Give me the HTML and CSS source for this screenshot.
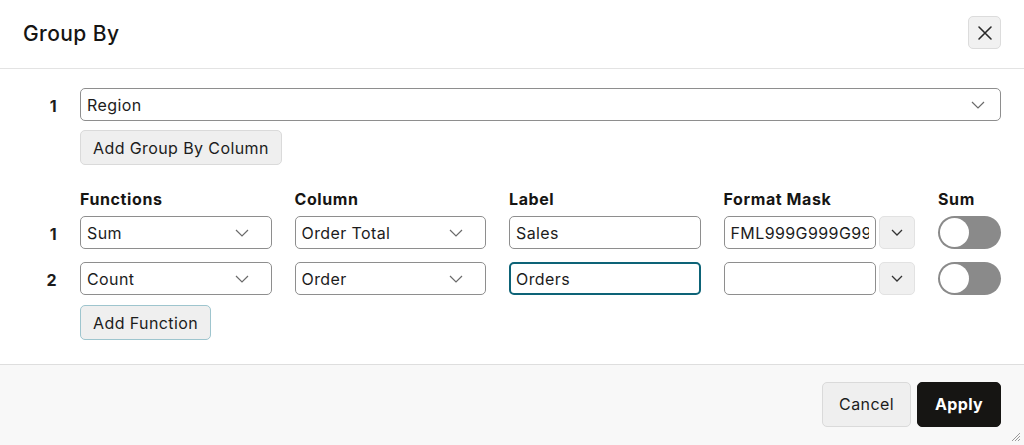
FILE: index.html
```html
<!DOCTYPE html>
<html lang="en">
<head>
<meta charset="utf-8">
<title>Group By</title>
<link rel="stylesheet" href="styles.css">
</head>
<body>
<div class="dialog">
  <header class="dlg-header">
    <h1 class="dlg-title">Group By</h1>
    <button class="close-btn" aria-label="Close">
      <svg width="16" height="16" viewBox="0 0 16 16"><path d="M2 2 L14 14 M14 2 L2 14" stroke="#2a2a2a" stroke-width="1.6" fill="none" stroke-linecap="round"/></svg>
    </button>
  </header>

  <main class="dlg-body">
    <div class="group-row">
      <div class="row-num">1</div>
      <div class="field select">
        <span class="val">Region</span>
        <svg class="chev" width="14" height="8" viewBox="0 0 14 8"><path d="M1 1 L7 7 L13 1" stroke="#6b6b6b" stroke-width="1.2" fill="none"/></svg>
      </div>
    </div>
    <div class="btn-row">
      <button class="btn">Add Group By Column</button>
    </div>

    <div class="fn-grid">
      <div></div>
      <div class="col-head">Functions</div>
      <div class="col-head">Column</div>
      <div class="col-head">Label</div>
      <div class="col-head">Format Mask</div>
      <div class="col-head">Sum</div>

      <div class="row-num">1</div>
      <div class="field select"><span class="val">Sum</span><svg class="chev" width="14" height="8" viewBox="0 0 14 8"><path d="M1 1 L7 7 L13 1" stroke="#6b6b6b" stroke-width="1.2" fill="none"/></svg></div>
      <div class="field select"><span class="val">Order Total</span><svg class="chev" width="14" height="8" viewBox="0 0 14 8"><path d="M1 1 L7 7 L13 1" stroke="#6b6b6b" stroke-width="1.2" fill="none"/></svg></div>
      <div class="field"><span class="val">Sales</span></div>
      <div class="mask">
        <div class="field mask-input"><span class="val">FML999G999G999G999D00</span></div>
        <div class="mask-btn"><svg width="12" height="7" viewBox="0 0 12 7"><path d="M1 1 L6 6 L11 1" stroke="#333" stroke-width="1.3" fill="none"/></svg></div>
      </div>
      <div class="toggle"><span class="knob"></span></div>

      <div class="row-num">2</div>
      <div class="field select"><span class="val">Count</span><svg class="chev" width="14" height="8" viewBox="0 0 14 8"><path d="M1 1 L7 7 L13 1" stroke="#6b6b6b" stroke-width="1.2" fill="none"/></svg></div>
      <div class="field select"><span class="val">Order</span><svg class="chev" width="14" height="8" viewBox="0 0 14 8"><path d="M1 1 L7 7 L13 1" stroke="#6b6b6b" stroke-width="1.2" fill="none"/></svg></div>
      <div class="field focused"><span class="val">Orders</span></div>
      <div class="mask">
        <div class="field mask-input"><span class="val"></span></div>
        <div class="mask-btn"><svg width="12" height="7" viewBox="0 0 12 7"><path d="M1 1 L6 6 L11 1" stroke="#333" stroke-width="1.3" fill="none"/></svg></div>
      </div>
      <div class="toggle"><span class="knob"></span></div>

      <div></div>
      <div class="add-fn-cell"><button class="btn btn-focus">Add Function</button></div>
    </div>
  </main>

  <footer class="dlg-footer">
    <button class="btn btn-lg">Cancel</button>
    <button class="btn btn-lg btn-primary">Apply</button>
    <svg class="grip" width="12" height="12" viewBox="0 0 12 12"><path d="M11 3 L3 11 M11 6 L6 11 M11 9 L9 11" stroke="#9a9a9a" stroke-width="1"/></svg>
  </footer>
</div>
</body>
</html>
```

FILE: styles.css
```css
* { box-sizing: border-box; }

html, body {
  margin: 0;
  padding: 0;
  background: #ffffff;
}

body {
  font-family: Inter, "Liberation Sans", Arial, sans-serif;
  color: #1c1c1c;
  font-size: 16px;
  letter-spacing: 0.4px;
}

.dialog {
  width: 1024px;
  height: 445px;
  display: flex;
  flex-direction: column;
  position: relative;
}

.dlg-header {
  height: 69px;
  flex: 0 0 69px;
  display: flex;
  align-items: center;
  justify-content: space-between;
  padding: 0 23px;
  border-bottom: 1px solid #e3e3e3;
}

.dlg-title {
  margin: 0;
  font-size: 21px;
  font-weight: 500;
  color: #161513;
  letter-spacing: 0.4px;
  padding-bottom: 2px;
}

.close-btn {
  width: 33px;
  height: 33px;
  border: 1px solid #dcdcdc;
  border-radius: 5px;
  background: #f1f1f1;
  display: flex;
  align-items: center;
  justify-content: center;
  padding: 0;
  margin-top: -3px;
}

.dlg-body {
  flex: 1;
  padding: 19px 23px 0 0;
}

.group-row {
  display: grid;
  grid-template-columns: 57px minmax(0, 1fr);
  column-gap: 23px;
  align-items: center;
}

.row-num {
  text-align: right;
  font-weight: 700;
  font-size: 16px;
  color: #1c1c1c;
  padding-top: 3px;
}

.field {
  height: 33px;
  min-width: 0;
  border: 1px solid #8e8e8e;
  border-radius: 5px;
  background: #fff;
  display: flex;
  align-items: center;
  padding: 0 6px;
  font-size: 16px;
  color: #1c1c1c;
  overflow: hidden;
  white-space: nowrap;
}

.field .val {
  flex: 1;
  min-width: 0;
  overflow: hidden;
  padding-top: 1px;
}

.select .chev {
  flex: 0 0 auto;
  margin-right: 10px;
}

.group-row .select .chev {
  margin-right: 9px;
}

.fn-grid .select .chev {
  margin-right: 16px;
}

.field.focused {
  border: 2px solid #0d6377;
  padding: 0 5px;
}

.btn-row {
  padding-left: 80px;
  margin-top: 9px;
}

.btn {
  font-family: inherit;
  font-size: 16px;
  letter-spacing: 0.4px;
  color: #1c1c1c;
  background: #efefef;
  border: 1px solid #dadada;
  border-radius: 5px;
  height: 35px;
  padding: 0 12px;
  cursor: pointer;
}

.btn-focus {
  border-color: #9ec5ce;
}

.fn-grid {
  display: grid;
  grid-template-columns: 57px repeat(4, minmax(0, 1fr)) 63px;
  column-gap: 23px;
  margin-top: 24px;
  align-items: center;
}

.col-head {
  font-weight: 700;
  font-size: 16px;
  letter-spacing: 0.6px;
  height: 21px;
  margin-bottom: 6px;
  color: #161513;
  white-space: nowrap;
}

.fn-grid > .row-num,
.fn-grid > .field,
.fn-grid > .mask,
.fn-grid > .toggle {
  margin-bottom: 13px;
}

.mask {
  display: flex;
  gap: 3px;
  min-width: 0;
}

.mask-input {
  flex: 1;
  min-width: 0;
}

.mask-btn {
  flex: 0 0 36px;
  height: 33px;
  background: #f0f0f0;
  border: 1px solid #e2e2e2;
  border-radius: 5px;
  display: flex;
  align-items: center;
  justify-content: center;
}

.toggle {
  width: 63px;
  height: 33px;
  border-radius: 17px;
  background: #8a8a8a;
  position: relative;
}

.knob {
  position: absolute;
  left: 2px;
  top: 2px;
  width: 29px;
  height: 29px;
  border-radius: 50%;
  background: #ffffff;
}

.add-fn-cell {
  margin-top: -3px;
  white-space: nowrap;
}

.dlg-footer {
  flex: 0 0 81px;
  height: 81px;
  background: #f8f8f8;
  border-top: 1px solid #dedede;
  display: flex;
  align-items: center;
  justify-content: flex-end;
  gap: 6px;
  padding: 0 23px 2px 0;
  position: relative;
}

.btn-lg {
  height: 45px;
  padding: 0 10px;
}

.btn-lg:first-child {
  width: 89px;
}

.btn-primary {
  background: #161513;
  border-color: #161513;
  color: #ffffff;
  font-weight: 700;
  width: 84px;
}

.grip {
  position: absolute;
  right: 3px;
  bottom: 3px;
}
```
